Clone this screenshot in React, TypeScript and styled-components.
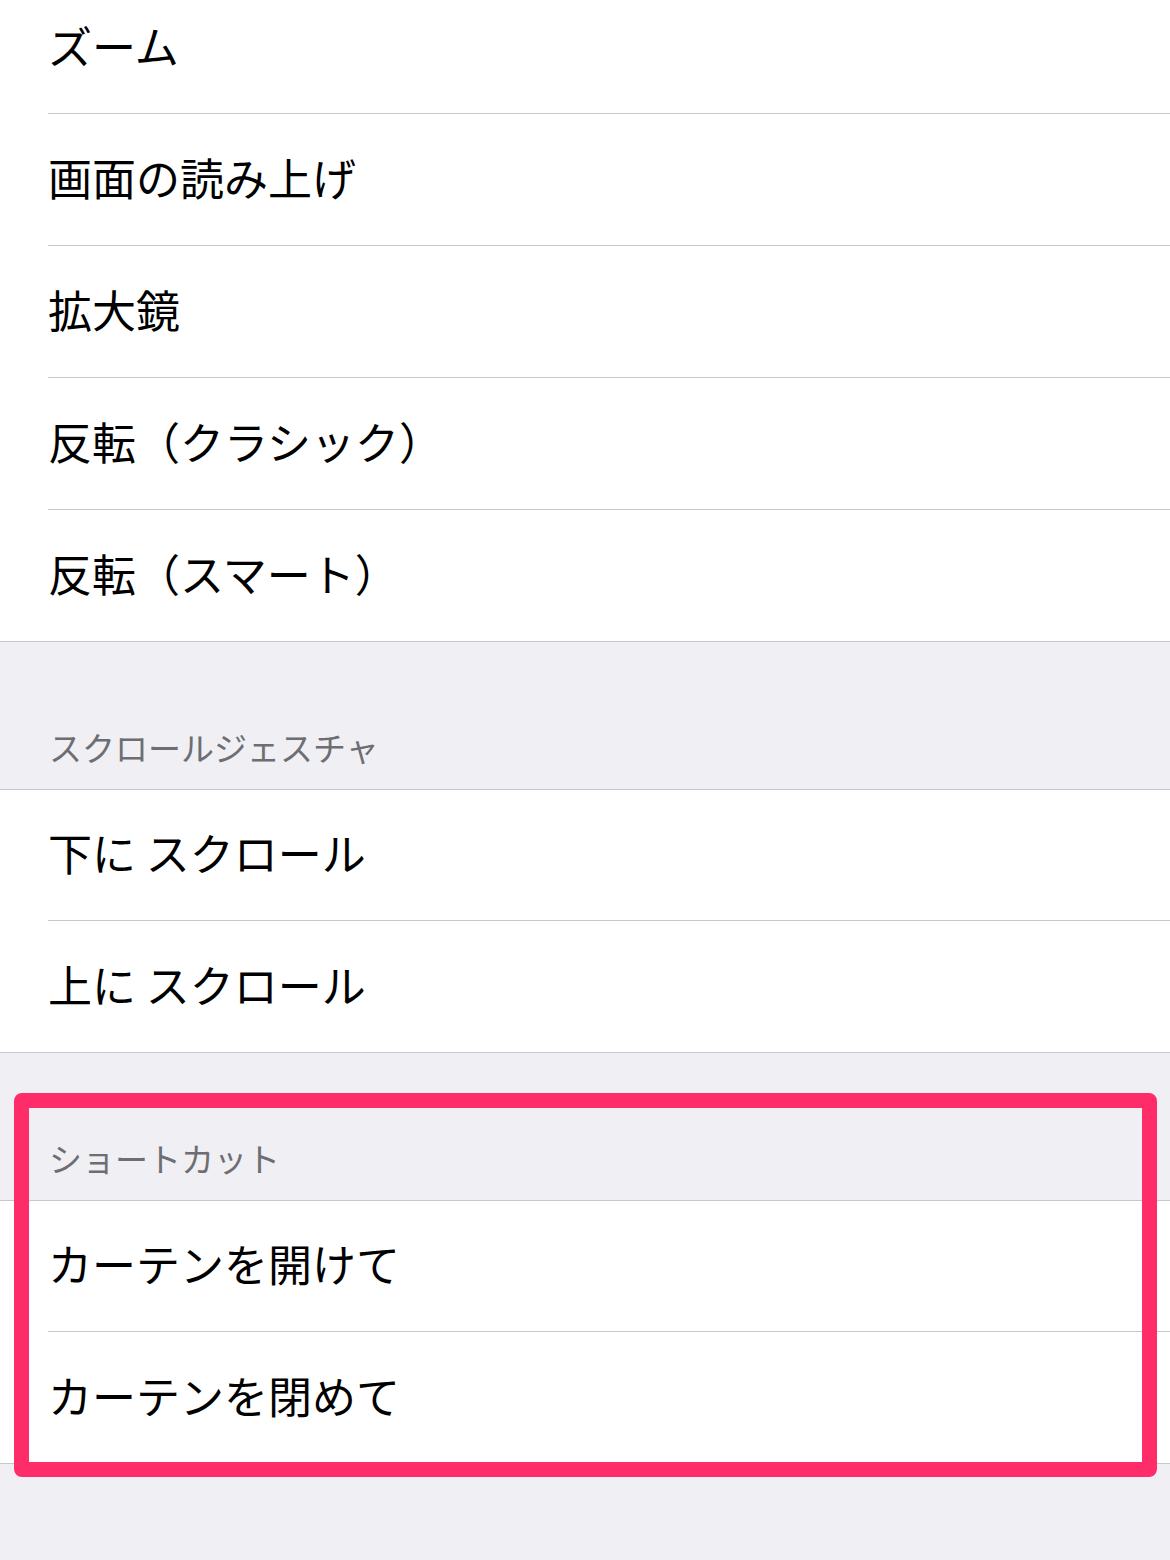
import React from "react";
import styled, { createGlobalStyle } from "styled-components";

const GlobalStyle = createGlobalStyle`
  html, body {
    margin: 0;
    padding: 0;
    background: #efeff4;
  }
  body {
    font-family: "Noto Sans CJK JP", "Noto Sans", sans-serif;
    -webkit-font-smoothing: antialiased;
  }
`;

const Page = styled.div`
  width: 1170px;
  height: 1560px;
  overflow: hidden;
  background: #efeff4;
`;

const Group = styled.section<{ $first?: boolean; $tight?: boolean }>`
  background: #ffffff;
  border-top: 1px solid #c8c7cc;
  border-bottom: 1px solid #c8c7cc;
  margin-top: ${(p) => (p.$first ? "-19px" : "0")};
  & > div:first-child > div {
    height: ${(p) => (p.$tight ? "131px" : "132px")};
  }
`;

const Row = styled.div`
  padding-left: 48px;
  &:last-child > div {
    border-bottom: none;
    height: 131px;
  }
`;

const RowInner = styled.div`
  height: 132px;
  box-sizing: border-box;
  border-bottom: 1px solid #c8c7cc;
  display: flex;
  align-items: center;
  padding-bottom: 6px;
  font-size: 44px;
  line-height: 1;
  color: #000000;
  white-space: pre;
`;

const Header = styled.div`
  height: 147px;
  box-sizing: border-box;
  display: flex;
  align-items: flex-end;
  padding: 0 0 23px 49px;
  font-size: 33px;
  line-height: 38px;
  color: #6d6d72;
`;

const HighlightArea = styled.div`
  position: relative;
`;

const Highlight = styled.div`
  position: absolute;
  top: 40px;
  left: 14px;
  right: 13px;
  bottom: -13px;
  border: 15px solid #fe2d6a;
  border-radius: 8px;
  pointer-events: none;
`;

const Item: React.FC<{ label: string }> = ({ label }) => (
  <Row>
    <RowInner>{label}</RowInner>
  </Row>
);

export default function App() {
  return (
    <Page>
      <GlobalStyle />
      <Group $first>
        <Item label="ズーム" />
        <Item label="画面の読み上げ" />
        <Item label="拡大鏡" />
        <Item label="反転（クラシック）" />
        <Item label="反転（スマート）" />
      </Group>
      <Header>スクロールジェスチャ</Header>
      <Group $tight>
        <Item label="下に スクロール" />
        <Item label="上に スクロール" />
      </Group>
      <HighlightArea>
        <Header>ショートカット</Header>
        <Group $tight>
          <Item label="カーテンを開けて" />
          <Item label="カーテンを閉めて" />
        </Group>
        <Highlight />
      </HighlightArea>
    </Page>
  );
}
